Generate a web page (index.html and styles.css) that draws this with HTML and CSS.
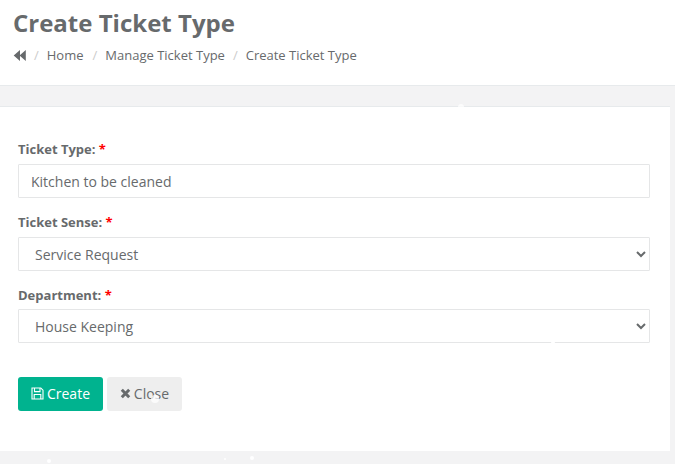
FILE: index.html
```html
<!DOCTYPE html>
<html lang="en">
<head>
    <meta charset="UTF-8">
    <title>Create Ticket Type</title>
    <link rel="stylesheet" href="styles.css">
</head>
<body>
    <header class="page-heading">
        <h1>Create Ticket Type</h1>
        <ol class="breadcrumb">
            <li>
                <svg class="back-icon" width="13" height="11" viewBox="0 0 13 11"><path d="M7 0V11L0.7 5.5ZM12.8 0V11L6.5 5.5Z" fill="#676a6c"/></svg>
            </li>
            <li>Home</li>
            <li>Manage Ticket Type</li>
            <li>Create Ticket Type</li>
        </ol>
    </header>

    <main class="content">
        <form class="panel">
            <div class="form-group">
                <label>Ticket Type: <span class="required">*</span></label>
                <input class="form-control" type="text" value="Kitchen to be cleaned">
            </div>
            <div class="form-group">
                <label>Ticket Sense: <span class="required">*</span></label>
                <select class="form-control">
                    <option>Service Request</option>
                </select>
            </div>
            <div class="form-group">
                <label>Department: <span class="required">*</span></label>
                <select class="form-control">
                    <option>House Keeping</option>
                </select>
            </div>
            <div class="actions">
                <button class="btn btn-primary" type="button">
                    <svg width="13" height="13" viewBox="0 0 13 13" fill="none" stroke="#fff" stroke-width="1.1"><path d="M1 1H9.8L12 3.2V12H1Z"/><path d="M3.5 1V4.6H9V1M3.2 12V7.5H9.8V12"/></svg>
                    Create
                </button>
                <button class="btn btn-default" type="button">
                    <svg width="11" height="11" viewBox="0 0 11 11"><path d="M1.8 1.8L9.2 9.2M9.2 1.8L1.8 9.2" stroke="#676a6c" stroke-width="3"/></svg>
                    Close
                </button>
            </div>
        </form>
    </main>

    <div class="snow">
        <span class="flake flake-a"></span>
        <span class="flake flake-b"></span>
        <span class="flake flake-c"></span>
        <span class="flake flake-d"></span>
        <span class="flake flake-e"></span>
        <span class="flake flake-f"></span>
    </div>
</body>
</html>
```

FILE: styles.css
```css
/* General Styles */
body {
    margin: 0;
    background-color: #f3f3f4;
    color: #676a6c;
    font-family: 'Open Sans', sans-serif;
    font-size: 13px;
}

.page-heading {
    height: 86px;
    box-sizing: border-box;
    padding: 8px 13px 0;
    background-color: #ffffff;
    border-bottom: 1px solid #e7eaec;
}

h1 {
    margin: 0;
    font-size: 24px;
    font-weight: 700;
    line-height: 30px;
}

.breadcrumb {
    display: flex;
    align-items: center;
    margin: 8px 0 0;
    padding: 0;
    list-style: none;
    line-height: 18px;
}

.breadcrumb li + li::before {
    content: "/";
    padding: 0 8px;
    color: #ccc;
}

.breadcrumb li:nth-child(2) {
    margin-right: 1px;
}

.back-icon {
    display: block;
}

.content {
    padding: 20px 5px 13px 0;
}

.panel {
    height: 345px;
    box-sizing: border-box;
    padding: 33px 20px 0 18px;
    background-color: #ffffff;
    border-top: 1px solid #e7eaec;
}

.form-group {
    margin-bottom: 15px;
}

label {
    display: block;
    margin-bottom: 6px;
    font-weight: 700;
    line-height: 18px;
}

.form-group:nth-child(3) {
    margin-bottom: 14px;
}

.form-group:nth-child(3) label {
    margin-bottom: 5px;
}

.required {
    color: #ff0000;
}

.form-control {
    display: block;
    width: 100%;
    height: 34px;
    box-sizing: border-box;
    padding: 6px 12px;
    background-color: #ffffff;
    border: 1px solid #e5e6e7;
    border-radius: 1px;
    color: #676a6c;
    font-family: 'Open Sans', sans-serif;
    font-size: 14px;
}

.actions {
    display: flex;
    gap: 4px;
    margin-top: 34px;
}

.btn {
    display: flex;
    align-items: center;
    justify-content: center;
    gap: 3px;
    height: 34px;
    padding: 0 0 2px;
    border: none;
    border-radius: 3px;
    font-family: 'Open Sans', sans-serif;
    font-size: 14px;
}

.btn-primary {
    width: 85px;
    background-color: #00b38f;
    color: #ffffff;
}

.btn-default {
    width: 75px;
    background-color: #eeeeee;
    color: #676a6c;
}

/* Snow overlay */
.flake {
    position: absolute;
    border-radius: 50%;
    background-color: #ffffff;
}

.flake-a {
    left: 458px;
    top: 104px;
    width: 6px;
    height: 6px;
    opacity: 0.7;
}

.flake-b {
    left: 151px;
    top: 395px;
    width: 8px;
    height: 8px;
    opacity: 0.75;
}

.flake-c {
    left: 47px;
    top: 459px;
    width: 4px;
    height: 4px;
}

.flake-d {
    left: 250px;
    top: 456px;
    width: 4px;
    height: 4px;
}

.flake-e {
    left: 224px;
    top: 458px;
    width: 2px;
    height: 2px;
}

.flake-f {
    left: 551px;
    top: 340px;
    width: 4px;
    height: 4px;
}
```
